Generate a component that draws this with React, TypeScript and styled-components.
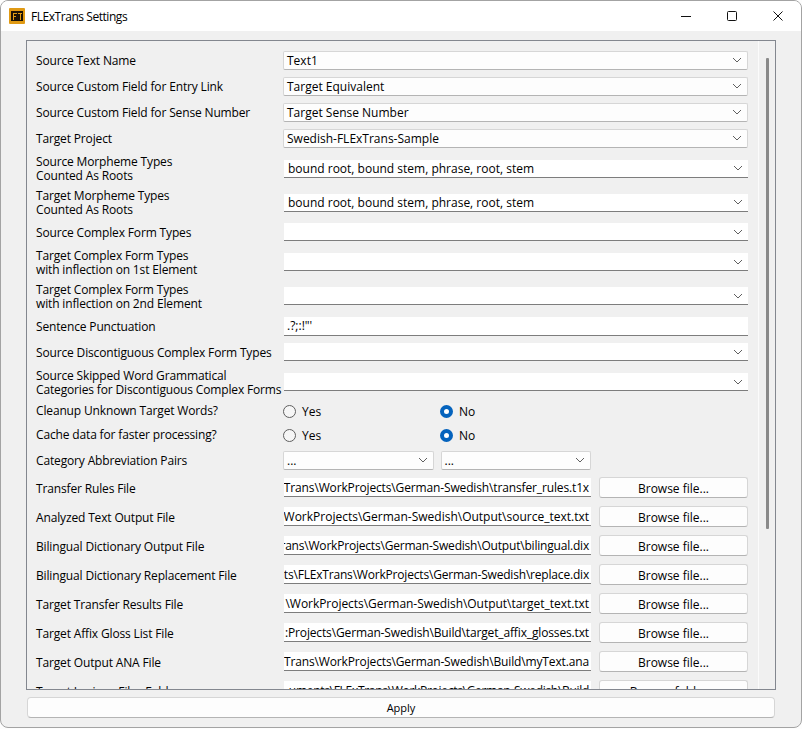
import React from 'react';
import styled, { createGlobalStyle } from 'styled-components';

const Global = createGlobalStyle`
  html, body { margin: 0; padding: 0; background: #fdfdfd; }
  body { font-family: "Open Sans", "Noto Sans", sans-serif; font-size: 12px; color: #000; }
`;

const Page = styled.div`
  width: 802px;
  height: 729px;
  overflow: hidden;
`;
const Frame = styled.div`
  box-sizing: border-box;
  width: 802px;
  height: 728px;
  background: #f0f0f0;
  border: 1px solid #a3a3a3;
  border-radius: 8px;
  overflow: hidden;
  display: flex;
  flex-direction: column;
`;
const TitleBar = styled.header`
  height: 30px;
  flex: none;
  background: #fff;
  display: flex;
  align-items: center;
  padding-left: 8px;
  gap: 6px;
`;
const Title = styled.div`
  flex: 1;
  font-size: 12px;
  letter-spacing: -0.45px;
`;
const WinButtons = styled.div`
  display: flex;
`;
const WinButton = styled.div`
  width: 46px;
  height: 30px;
  display: flex;
  align-items: center;
  justify-content: center;
`;
const Body = styled.main`
  flex: 1;
  padding: 9px 25px 9px 25px;
  display: flex;
  flex-direction: column;
  gap: 7px;
`;
const Panel = styled.section`
  box-sizing: border-box;
  height: 650px;
  border: 1px solid #83878f;
  display: flex;
  overflow: hidden;
`;
const Rows = styled.div`
  flex: 1;
  padding: 9px 10px 0 9px;
  display: flex;
  flex-direction: column;
  gap: 6px;
`;
const Row = styled.div<{ $h: number }>`
  flex: none;
  height: ${p => p.$h}px;
  display: flex;
  align-items: center;
`;
const Label = styled.div<{ $tight?: boolean }>`
  flex: none;
  width: 247px;
  padding-top: ${p => (p.$tight ? 0 : 2)}px;
  line-height: 14px;
  white-space: pre;
  letter-spacing: -0.15px;
`;
const Combo = styled.div<{ $flat?: boolean }>`
  box-sizing: border-box;
  flex: 1;
  min-width: 0;
  height: ${p => (p.$flat ? 18 : 19)}px;
  margin-left: ${p => (p.$flat ? 1 : 0)}px;
  display: flex;
  align-items: center;
  justify-content: space-between;
  padding: 0 5px 0 ${p => (p.$flat ? 4 : 3)}px;
  background: ${p => (p.$flat ? '#fff' : '#fdfdfd')};
  border: ${p => (p.$flat ? 'none' : '1px solid #d6d6d6')};
  border-bottom: 1px solid ${p => (p.$flat ? '#7d7d7d' : '#b4b4b4')};
  border-radius: ${p => (p.$flat ? 0 : 2)}px;
  white-space: nowrap;
`;
const ComboPair = styled.div`
  display: flex;
  gap: 7px;
  width: 308px;
`;
const TextField = styled.div`
  box-sizing: border-box;
  flex: 1;
  min-width: 0;
  height: 19px;
  margin-left: 1px;
  padding: 0 3px;
  background: #fff;
  border-bottom: 1px solid #7d7d7d;
  display: flex;
  align-items: center;
  white-space: nowrap;
  overflow: hidden;
`;
const PathField = styled(TextField)<{ $track: number }>`
  justify-content: flex-end;
  flex: none;
  width: 307px;
  padding: 1px 2px 0 0;
  letter-spacing: ${p => p.$track}px;
`;
const Browse = styled.button`
  box-sizing: border-box;
  flex: none;
  width: 149px;
  height: 21px;
  margin-left: 8px;
  background: #fdfdfd;
  border: 1px solid #d6d6d6;
  border-bottom-color: #b4b4b4;
  border-radius: 3px;
  font: inherit;
  color: #000;
  padding: 1px 0 0;
`;
const RadioGroup = styled.div`
  display: flex;
  align-items: center;
  gap: 6px;
  width: 157px;
`;
const RadioDot = styled.span<{ $on?: boolean }>`
  box-sizing: border-box;
  width: 13px;
  height: 13px;
  border-radius: 50%;
  background: ${p => (p.$on ? '#fff' : '#f6f6f6')};
  border: ${p => (p.$on ? '4px solid #0563bd' : '1px solid #5f5f5f')};
`;
const ScrollTrack = styled.div`
  flex: none;
  width: 17px;
  border-left: 1px solid #fbfbfb;
  padding: 17px 0 0 7px;
  box-sizing: border-box;
`;
const ScrollThumb = styled.div`
  width: 3px;
  height: 471px;
  background: #8a8a8a;
  border-radius: 1px;
`;
const Apply = styled.button`
  box-sizing: border-box;
  height: 21px;
  margin: 0 1px;
  background: #fdfdfd;
  border: 1px solid #d6d6d6;
  border-bottom-color: #b4b4b4;
  border-radius: 4px;
  font: inherit;
  font-size: 11px;
  color: #000;
  padding: 0;
`;

const Chevron = () => (
  <svg width="10" height="6" viewBox="0 0 10 6" fill="none">
    <path d="M1 1l4 4 4-4" stroke="#606060" strokeWidth="1" />
  </svg>
);

const Logo = () => (
  <svg width="16" height="16" viewBox="0 0 16 16">
    <rect width="16" height="16" rx="1" fill="#e09a14" />
    <rect x="2" y="3" width="12" height="10" fill="#1a1206" />
    <path d="M4 5h4v1H5v2h2v1H5v3H4zM9 5h4v1h-1v6h-1V6H9z" fill="#e09a14" />
  </svg>
);

const topCombos = [
  ['Source Text Name', 'Text1'],
  ['Source Custom Field for Entry Link', 'Target Equivalent'],
  ['Source Custom Field for Sense Number', 'Target Sense Number'],
  ['Target Project', 'Swedish-FLExTrans-Sample'],
];
const files: [string, string, number][] = [
  ['Transfer Rules File', 'Trans\\WorkProjects\\German-Swedish\\transfer_rules.t1x', -0.14],
  ['Analyzed Text Output File', 'WorkProjects\\German-Swedish\\Output\\source_text.txt', 0],
  ['Bilingual Dictionary Output File', 'rans\\WorkProjects\\German-Swedish\\Output\\bilingual.dix', -0.2],
  ['Bilingual Dictionary Replacement File', 'ts\\FLExTrans\\WorkProjects\\German-Swedish\\replace.dix', -0.19],
  ['Target Transfer Results File', '\\WorkProjects\\German-Swedish\\Output\\target_text.txt', -0.04],
  ['Target Affix Gloss List File', ':Projects\\German-Swedish\\Build\\target_affix_glosses.txt', -0.14],
  ['Target Output ANA File', 'Trans\\WorkProjects\\German-Swedish\\Build\\myText.ana', -0.14],
];
const roots = 'bound root, bound stem, phrase, root, stem';

const FlatRow = ({ h, label, value, tight }: { h: number; label: string; value?: string; tight?: boolean }) => (
  <Row $h={h}>
    <Label $tight={tight}>{label}</Label>
    <Combo $flat>
      <span>{value}</span>
      <Chevron />
    </Combo>
  </Row>
);

const RadioRow = ({ label }: { label: string }) => (
  <Row $h={18}>
    <Label $tight>{label}</Label>
    <RadioGroup>
      <RadioDot />
      <span>Yes</span>
    </RadioGroup>
    <RadioGroup>
      <RadioDot $on />
      <span>No</span>
    </RadioGroup>
  </Row>
);

export default function App() {
  return (
    <Page>
      <Global />
      <Frame>
        <TitleBar>
          <Logo />
          <Title>FLExTrans Settings</Title>
          <WinButtons>
            <WinButton>
              <svg width="10" height="10" viewBox="0 0 10 10"><path d="M0 5.5h10" stroke="#111" /></svg>
            </WinButton>
            <WinButton>
              <svg width="10" height="10" viewBox="0 0 10 10" fill="none"><rect x="0.5" y="0.5" width="9" height="9" rx="1" stroke="#111" /></svg>
            </WinButton>
            <WinButton>
              <svg width="10" height="10" viewBox="0 0 10 10" fill="none"><path d="M0.5 0.5l9 9M9.5 0.5l-9 9" stroke="#111" /></svg>
            </WinButton>
          </WinButtons>
        </TitleBar>
        <Body>
          <Panel>
            <Rows>
              {topCombos.map(([l, v]) => (
                <Row $h={20} key={l}>
                  <Label>{l}</Label>
                  <Combo>
                    <span>{v}</span>
                    <Chevron />
                  </Combo>
                </Row>
              ))}
              <FlatRow tight h={29} label={'Source Morpheme Types\nCounted As Roots'} value={roots} />
              <FlatRow tight h={27} label={'Target Morpheme Types\nCounted As Roots'} value={roots} />
              <FlatRow h={20} label="Source Complex Form Types" />
              <FlatRow h={28} label={'Target Complex Form Types\nwith inflection on 1st Element'} />
              <FlatRow h={28} label={'Target Complex Form Types\nwith inflection on 2nd Element'} />
              <Row $h={20}>
                <Label>Sentence Punctuation</Label>
                <TextField>{'.?;:!"\''}</TextField>
              </Row>
              <FlatRow h={20} label="Source Discontiguous Complex Form Types" />
              <FlatRow h={28} label={'Source Skipped Word Grammatical\nCategories for Discontiguous Complex Forms'} />
              <RadioRow label="Cleanup Unknown Target Words?" />
              <RadioRow label="Cache data for faster processing?" />
              <Row $h={20}>
                <Label>Category Abbreviation Pairs</Label>
                <ComboPair>
                  <Combo><span>...</span><Chevron /></Combo>
                  <Combo><span>...</span><Chevron /></Combo>
                </ComboPair>
              </Row>
              {files.map(([l, f, t]) => (
                <Row $h={23} key={l}>
                  <Label>{l}</Label>
                  <PathField $track={t}>{f}</PathField>
                  <Browse>Browse file...</Browse>
                </Row>
              ))}
              <Row $h={23}>
                <Label>Target Lexicon Files Folder</Label>
                <PathField $track={-0.3}>{'uments\\FLExTrans\\WorkProjects\\German-Swedish\\Build'}</PathField>
                <Browse>Browse folder...</Browse>
              </Row>
            </Rows>
            <ScrollTrack><ScrollThumb /></ScrollTrack>
          </Panel>
          <Apply>Apply</Apply>
        </Body>
      </Frame>
    </Page>
  );
}
